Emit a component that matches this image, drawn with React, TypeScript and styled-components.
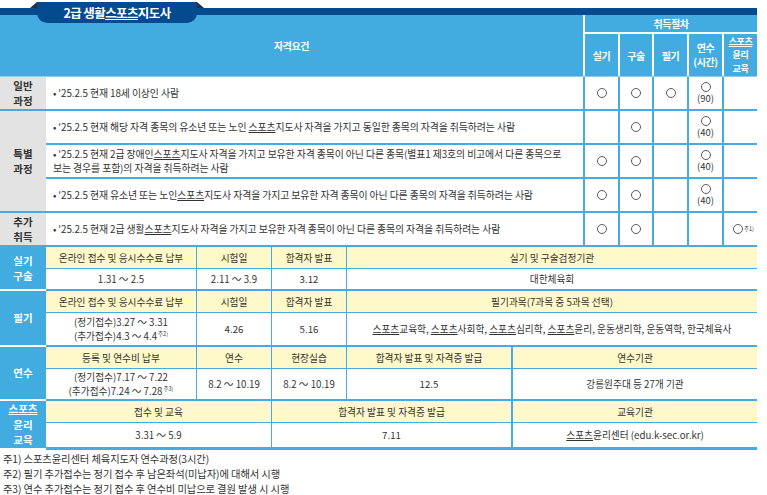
import React from 'react';
import styled, { createGlobalStyle } from 'styled-components';

const BLUE = '#42abe0';
const DARK = '#034a8e';
const LINE = '#45abe0';
const YELLOW = '#fff8c8';
const GRAY = '#e3e3e4';
const TEXT = '#333';

const GlobalStyle = createGlobalStyle`
  html, body { margin: 0; padding: 0; background: #fff; }
  body { font-family: "Noto Sans CJK KR", "Noto Sans", sans-serif; color: ${TEXT}; }
  * { box-sizing: border-box; }
`;

const Page = styled.div`
  width: 767px;
  height: 495px;
  overflow: hidden;
`;

const TitleBar = styled.div`
  position: relative;
  width: 757px;
  padding-top: 8px;
`;

const DarkBar = styled.div`
  height: 7px;
  background: ${DARK};
`;

const Tab = styled.div`
  position: absolute;
  left: 37px;
  top: 2px;
  width: 160px;
  height: 21px;
  background: ${DARK};
  border-radius: 0 0 10px 10px;
  display: flex;
  align-items: center;
  justify-content: center;
  color: #fff;
  font-weight: 700;
  font-size: 12.5px;
  letter-spacing: -0.6px;
  z-index: 2;
  &::before, &::after {
    content: '';
    position: absolute;
    top: 0;
    border-style: solid;
  }
  &::before {
    left: -7px;
    border-width: 0 0 6px 7px;
    border-color: transparent transparent #26313d transparent;
  }
  &::after {
    right: -7px;
    border-width: 0 7px 6px 0;
    border-color: transparent transparent #26313d transparent;
  }
`;

const U = styled.span`
  text-decoration: underline;
  text-underline-offset: 1px;
  text-decoration-thickness: 1px;
`;

const Header = styled.div`
  display: grid;
  grid-template-columns: 583px 33px 32px 33px 33px 33px;
  grid-template-rows: 17px 42px;
  gap: 2px;
  width: 757px;
  background: #fff;
  border-bottom: 1px solid #8fcdee;
`;

const HeadCell = styled.div<{ $col?: string; $row?: string; $fs?: number; $lh?: number }>`
  grid-column: ${p => p.$col || 'auto'};
  grid-row: ${p => p.$row || 'auto'};
  background: ${BLUE};
  color: #fff;
  font-weight: 700;
  font-size: ${p => p.$fs || 10}px;
  line-height: ${p => p.$lh || 15}px;
  letter-spacing: -0.4px;
  display: flex;
  align-items: center;
  justify-content: center;
  text-align: center;
`;

const Body = styled.div`
  display: grid;
  grid-template-columns: 46px 537px 35px 34px 35px 35px 35px;
  grid-auto-rows: 34px;
  width: 757px;
`;

const RowLabel = styled.div<{ $span?: number }>`
  grid-row: span ${p => p.$span || 1};
  background: ${GRAY};
  border-bottom: 2px solid ${LINE};
  display: flex;
  align-items: center;
  justify-content: center;
  text-align: center;
  font-weight: 700;
  font-size: 10.5px;
  line-height: 15.5px;
  color: #333;
`;

const ReqCell = styled.div`
  border-bottom: 2px solid ${LINE};
  display: flex;
  flex-direction: column;
  justify-content: center;
  padding-left: 7px;
  font-size: 9.9px;
  line-height: 14.5px;
  letter-spacing: -0.1px;
  color: ${TEXT};
  white-space: nowrap;
`;

const MarkCell = styled.div`
  border-bottom: 2px solid ${LINE};
  border-left: 2px solid ${LINE};
  display: flex;
  flex-direction: column;
  align-items: center;
  justify-content: center;
  font-size: 9.5px;
  line-height: 13px;
  color: ${TEXT};
`;

const Circle = styled.span`
  display: inline-block;
  width: 10px;
  height: 10px;
  border: 1px solid #5a5a5a;
  border-radius: 50%;
`;

const Sup = styled.sup`
  font-size: 5.5px;
  line-height: 0;
  vertical-align: 4px;
  margin-left: 1px;
`;

const MarkWithNote = styled.span`
  display: inline-flex;
  align-items: center;
  margin-left: 6px;
`;

const Section = styled.div`
  display: flex;
  width: 757px;
`;

const SideLabel = styled.div`
  width: 46px;
  flex: none;
  background: ${BLUE};
  border-bottom: 2px solid #fff;
  color: #fff;
  font-weight: 700;
  font-size: 10.5px;
  line-height: 15.5px;
  display: flex;
  align-items: center;
  justify-content: center;
  text-align: center;
`;

const CellGrid = styled.div<{ $cols: string; $white: number }>`
  flex: 1;
  display: grid;
  grid-template-columns: ${p => p.$cols};
  grid-template-rows: 21px ${p => p.$white}px;
  gap: 1px;
  background: ${LINE};
  border-bottom: 2px solid ${LINE};
`;

const YCell = styled.div<{ $thick?: boolean; $span?: number }>`
  grid-column: span ${p => p.$span || 1};
  background: ${YELLOW};
  border-left: ${p => (p.$thick ? `1px solid ${LINE}` : 'none')};
  display: flex;
  align-items: center;
  justify-content: center;
  font-size: 9.7px;
  color: ${TEXT};
  white-space: nowrap;
`;

const WCell = styled.div<{ $thick?: boolean; $span?: number }>`
  grid-column: span ${p => p.$span || 1};
  background: #fff;
  border-left: ${p => (p.$thick ? `1px solid ${LINE}` : 'none')};
  display: flex;
  flex-direction: column;
  align-items: center;
  justify-content: center;
  font-size: 9.7px;
  line-height: 14px;
  color: ${TEXT};
  white-space: nowrap;
`;

const Notes = styled.div`
  padding: 1px 0 0 3px;
  font-size: 10.3px;
  line-height: 15px;
  color: #333;
  letter-spacing: -0.1px;
`;

const Mark = ({ hours }: { hours?: string }) => (
  <>
    <Circle />
    {hours && <span>{hours}</span>}
  </>
);

export default function App() {
  return (
    <Page>
      <GlobalStyle />
      <TitleBar>
        <DarkBar />
        <Tab>
          <span>
            2급 생활<U>스포츠</U>지도사
          </span>
        </Tab>
      </TitleBar>

      <Header>
        <HeadCell $col="1" $row="1 / span 2">자격요건</HeadCell>
        <HeadCell $col="2 / span 5" $row="1">취득절차</HeadCell>
        <HeadCell>실기</HeadCell>
        <HeadCell>구술</HeadCell>
        <HeadCell>필기</HeadCell>
        <HeadCell $lh={14.5}>
          연수
          <br />
          (시간)
        </HeadCell>
        <HeadCell $fs={9} $lh={13.2}>
          <span>
            <U>스포츠</U>
            <br />
            윤리
            <br />
            교육
          </span>
        </HeadCell>
      </Header>

      <Body>
        <RowLabel>
          일반
          <br />
          과정
        </RowLabel>
        <ReqCell>• '25.2.5 현재 18세 이상인 사람</ReqCell>
        <MarkCell><Mark /></MarkCell>
        <MarkCell><Mark /></MarkCell>
        <MarkCell><Mark /></MarkCell>
        <MarkCell><Mark hours="(90)" /></MarkCell>
        <MarkCell />

        <RowLabel $span={3}>
          특별
          <br />
          과정
        </RowLabel>
        <ReqCell>
          <span>
            • '25.2.5 현재 해당 자격 종목의 유소년 또는 노인 <U>스포츠</U>지도사 자격을 가지고 동일한 종목의 자격을 취득하려는 사람
          </span>
        </ReqCell>
        <MarkCell />
        <MarkCell><Mark /></MarkCell>
        <MarkCell />
        <MarkCell><Mark hours="(40)" /></MarkCell>
        <MarkCell />

        <ReqCell>
          <span>
            • '25.2.5 현재 2급 장애인<U>스포츠</U>지도사 자격을 가지고 보유한 자격 종목이 아닌 다른 종목(별표1 제3호의 비고에서 다른 종목으로
          </span>
          <span>보는 경우를 포함)의 자격을 취득하려는 사람</span>
        </ReqCell>
        <MarkCell><Mark /></MarkCell>
        <MarkCell><Mark /></MarkCell>
        <MarkCell />
        <MarkCell><Mark hours="(40)" /></MarkCell>
        <MarkCell />

        <ReqCell>
          <span>
            • '25.2.5 현재 유소년 또는 노인<U>스포츠</U>지도사 자격을 가지고 보유한 자격 종목이 아닌 다른 종목의 자격을 취득하려는 사람
          </span>
        </ReqCell>
        <MarkCell><Mark /></MarkCell>
        <MarkCell><Mark /></MarkCell>
        <MarkCell />
        <MarkCell><Mark hours="(40)" /></MarkCell>
        <MarkCell />

        <RowLabel>
          추가
          <br />
          취득
        </RowLabel>
        <ReqCell>
          <span>
            • '25.2.5 현재 2급 생활<U>스포츠</U>지도사 자격을 가지고 보유한 자격 종목이 아닌 다른 종목의 자격을 취득하려는 사람
          </span>
        </ReqCell>
        <MarkCell><Mark /></MarkCell>
        <MarkCell><Mark /></MarkCell>
        <MarkCell />
        <MarkCell />
        <MarkCell>
          <MarkWithNote>
            <Circle />
            <Sup>주1)</Sup>
          </MarkWithNote>
        </MarkCell>
      </Body>

      <Section>
        <SideLabel>
          실기
          <br />
          구술
        </SideLabel>
        <CellGrid $cols="150px 74px 74px 1fr" $white={20}>
          <YCell>온라인 접수 및 응시수수료 납부</YCell>
          <YCell>시험일</YCell>
          <YCell>합격자 발표</YCell>
          <YCell>실기 및 구술검정기관</YCell>
          <WCell>1.31 ～ 2.5</WCell>
          <WCell>2.11 ～ 3.9</WCell>
          <WCell>3.12</WCell>
          <WCell>대한체육회</WCell>
        </CellGrid>
      </Section>

      <Section>
        <SideLabel>필기</SideLabel>
        <CellGrid $cols="150px 74px 74px 1fr" $white={32}>
          <YCell>온라인 접수 및 응시수수료 납부</YCell>
          <YCell>시험일</YCell>
          <YCell>합격자 발표</YCell>
          <YCell>필기과목(7과목 중 5과목 선택)</YCell>
          <WCell>
            <span>(정기접수)3.27 ～ 3.31</span>
            <span>
              (추가접수)4.3 ～ 4.4<Sup>주2)</Sup>
            </span>
          </WCell>
          <WCell>4.26</WCell>
          <WCell>5.16</WCell>
          <WCell>
            <span>
              <U>스포츠</U>교육학, <U>스포츠</U>사회학, <U>스포츠</U>심리학, <U>스포츠</U>윤리, 운동생리학, 운동역학, 한국체육사
            </span>
          </WCell>
        </CellGrid>
      </Section>

      <Section>
        <SideLabel>연수</SideLabel>
        <CellGrid $cols="150px 74px 74px 164px 1fr" $white={30}>
          <YCell>등록 및 연수비 납부</YCell>
          <YCell>연수</YCell>
          <YCell>현장실습</YCell>
          <YCell>합격자 발표 및 자격증 발급</YCell>
          <YCell $thick>연수기관</YCell>
          <WCell>
            <span>(정기접수)7.17 ～ 7.22</span>
            <span>
              (추가접수)7.24 ～ 7.28<Sup>주3)</Sup>
            </span>
          </WCell>
          <WCell>8.2 ～ 10.19</WCell>
          <WCell>8.2 ～ 10.19</WCell>
          <WCell>12.5</WCell>
          <WCell $thick>강릉원주대 등 27개 기관</WCell>
        </CellGrid>
      </Section>

      <Section>
        <SideLabel>
          <span>
            <U>스포츠</U>
            <br />
            윤리
            <br />
            교육
          </span>
        </SideLabel>
        <CellGrid $cols="225px 239px 1fr" $white={24}>
          <YCell>접수 및 교육</YCell>
          <YCell>합격자 발표 및 자격증 발급</YCell>
          <YCell $thick>교육기관</YCell>
          <WCell>3.31 ～ 5.9</WCell>
          <WCell>7.11</WCell>
          <WCell $thick>
            <span>
              <U>스포츠</U>윤리센터 (edu.k-sec.or.kr)
            </span>
          </WCell>
        </CellGrid>
      </Section>

      <Notes>
        <div>주1) 스포츠윤리센터 체육지도자 연수과정(3시간)</div>
        <div>주2) 필기 추가접수는 정기 접수 후 남은좌석(미납자)에 대해서 시행</div>
        <div>주3) 연수 추가접수는 정기 접수 후 연수비 미납으로 결원 발생 시 시행</div>
      </Notes>
    </Page>
  );
}
